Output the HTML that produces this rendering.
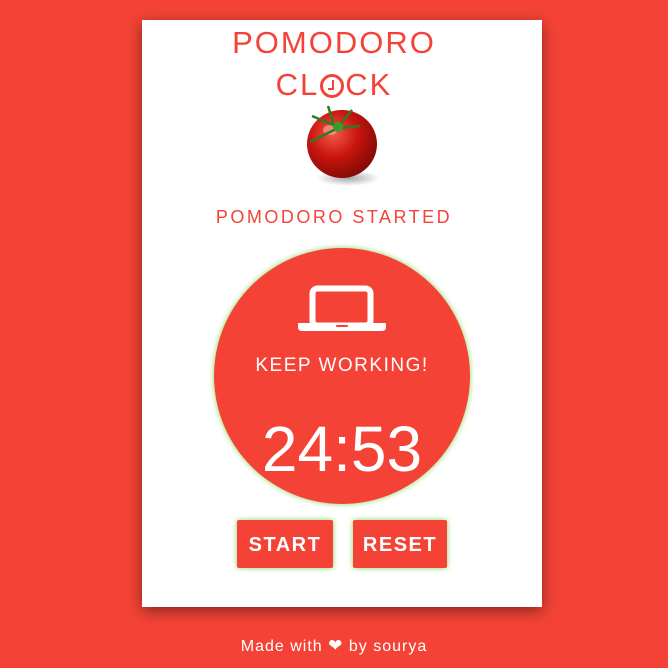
<!DOCTYPE html>
<html><head><meta charset="utf-8"><style>
body{margin:0;width:668px;height:668px;background:#f44336;font-family:"Liberation Sans",sans-serif;position:relative;overflow:hidden}
.card{position:absolute;left:142px;top:20px;width:400px;height:587px;background:#fff;box-shadow:0 4px 14px rgba(0,0,0,.45)}
.t{position:absolute;left:0;width:100%;text-align:center;color:#f44336;font-size:31px;letter-spacing:2px}
.circle{position:absolute;left:214px;top:248px;width:256px;height:256px;border-radius:50%;background:#f44336;box-shadow:0 0 6px #8bd35a}
.btn{position:absolute;top:520px;height:48px;background:#f44336;color:#fff;font-weight:bold;font-size:20px;letter-spacing:1.5px;text-align:center;line-height:50px;border-radius:2px;box-shadow:0 0 6px #8bd35a}
</style></head><body>
<div class="card"></div>
<div class="t" style="top:25px">POMODORO</div>
<div class="t" style="top:67px">CL<span style="display:inline-block;width:24px;height:24px;border:3px solid #f44336;border-radius:50%;box-sizing:border-box;vertical-align:-3px;position:relative;margin:0 1px"><span style="position:absolute;left:9px;top:3px;width:2px;height:8px;background:#f44336"></span><span style="position:absolute;left:5px;top:11px;width:6px;height:2px;background:#f44336"></span></span>CK</div>
<svg style="position:absolute;left:300px;top:100px" width="90" height="90" viewBox="0 0 90 90">
<defs><radialGradient id="g" cx="0.38" cy="0.35" r="0.7"><stop offset="0" stop-color="#f25a4a"/><stop offset="0.5" stop-color="#c8140e"/><stop offset="1" stop-color="#7e0a05"/></radialGradient>
<radialGradient id="s" cx="0.5" cy="0.5" r="0.5"><stop offset="0" stop-color="rgba(0,0,0,.35)"/><stop offset="1" stop-color="rgba(0,0,0,0)"/></radialGradient></defs>
<ellipse cx="48" cy="78" rx="32" ry="8" fill="url(#s)"/>
<ellipse cx="42" cy="44" rx="35" ry="34" fill="url(#g)"/>
<ellipse cx="30" cy="30" rx="7" ry="5" fill="rgba(255,255,255,.35)"/>
<path d="M35 28 L28 6 M36 26 L12 16 M38 27 L52 10 M38 28 L10 42 M40 28 L60 26" stroke="#2f7a1f" stroke-width="2.5" fill="none"/>
<circle cx="38" cy="27" r="5" fill="#3f9a2a"/>
</svg>
<div class="t" style="top:207px;font-size:18px;letter-spacing:2.5px">POMODORO STARTED</div>
<div class="circle"></div>
<svg style="position:absolute;left:298px;top:285px" width="88" height="46" viewBox="0 0 88 46">
<rect x="14.5" y="3.5" width="58" height="37" rx="5" fill="none" stroke="#fff" stroke-width="6"/>
<path d="M0 38 H88 V42 Q88 46 84 46 H4 Q0 46 0 42Z" fill="#fff"/>
<rect x="38" y="40" width="12" height="2" rx="1" fill="#f44336"/>
</svg>
<div style="position:absolute;left:214px;width:256px;top:355px;text-align:center;color:#fff;font-size:19px;letter-spacing:1.5px">KEEP WORKING!</div>
<div style="position:absolute;left:214px;width:256px;top:412px;text-align:center;color:#fff;font-size:64px">24:53</div>
<div class="btn" style="left:237px;width:96px">START</div>
<div class="btn" style="left:353px;width:94px">RESET</div>
<div style="position:absolute;left:0;width:668px;top:636px;text-align:center;color:#fff;font-size:16px;letter-spacing:1px">Made with <span style="font-size:17px">&#10084;</span> by sourya</div>
</body></html>
